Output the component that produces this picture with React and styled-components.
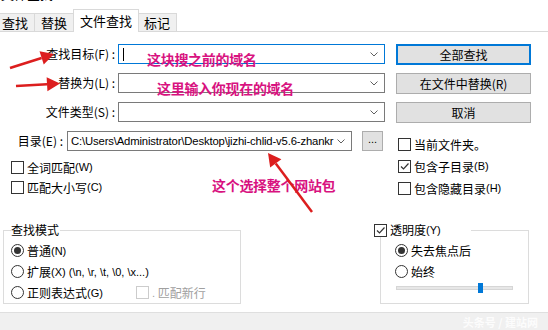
import React from "react";
import styled, { createGlobalStyle } from "styled-components";

const GlobalStyle = createGlobalStyle`
  html, body { margin: 0; padding: 0; background: #fff; }
  body {
    font-family: "Noto Sans CJK SC", "Noto Sans", sans-serif;
    font-size: 12px;
    color: #000;
  }
`;

const Window = styled.div`
  position: relative;
  width: 548px;
  height: 330px;
  overflow: hidden;
  display: flex;
  flex-direction: column;
  background: #fff;
`;

// window title, mostly cut off by the screenshot
const TitleStub = styled.div`
  height: 9px;
  overflow: hidden;
  padding-left: 1px;
  span {
    display: block;
    margin-top: -13px;
    font-size: 13px;
    line-height: 14px;
  }
`;

//tabs
const TabBar = styled.div`
  display: flex;
  align-items: flex-end;
  height: 22px;
  border-bottom: 1px solid #d9d9d9;
  margin-left: -4px;
`;

const Tab = styled.div`
  box-sizing: border-box;
  height: ${p => (p.$active ? 23 : 18)}px;
  margin: 0 ${p => (p.$active ? -1 : 0)}px ${p => (p.$active ? -1 : 0)}px -1px;
  padding: 0 6px ${p => (p.$active ? 2 : 0)}px;
  background: ${p => (p.$active ? "#fff" : "#f0f0f0")};
  border: 1px solid #d9d9d9;
  border-bottom: none;
  font-size: 13px;
  display: flex;
  align-items: center;
  position: relative;
  z-index: ${p => (p.$active ? 1 : 0)};
`;

const Panel = styled.div`
  padding-top: 12px;
  display: flex;
  flex-direction: column;
`;

//form rows
const FieldRow = styled.div`
  display: flex;
  align-items: flex-start;
  height: 21px;
  margin-bottom: ${p => (p.$last ? 0 : 8)}px;
`;

const Label = styled.div`
  width: ${p => p.$w}px;
  height: 20px;
  line-height: 20px;
  text-align: right;
  white-space: nowrap;
`;

const Combo = styled.div`
  box-sizing: border-box;
  width: ${p => p.$w}px;
  height: 20px;
  margin-left: ${p => p.$ml}px;
  border: 1px solid ${p => (p.$focus ? "#0078d7" : "#7a7a7a")};
  background: #fff;
  display: flex;
  align-items: center;
  padding: 0 6px 0 3px;
`;

const ComboText = styled.div`
  flex: 1;
  overflow: hidden;
  white-space: nowrap;
  font-family: "Liberation Sans", "Noto Sans", sans-serif;
  font-size: 11.3px;
  letter-spacing: -0.15px;
`;

const Caret = styled.div`
  width: 1px;
  height: 13px;
  background: #000;
  margin-left: 1px;
`;

const ActionButton = styled.button`
  box-sizing: border-box;
  width: 135px;
  height: 21px;
  margin: 0 0 0 11px;
  padding: 0;
  background: #e1e1e1;
  border: ${p => (p.$default ? "2px solid #0078d7" : "1px solid #adadad")};
  font-family: inherit;
  font-size: 12px;
  color: #000;
  display: flex;
  align-items: center;
  justify-content: center;
`;

const DotsButton = styled.button`
  box-sizing: border-box;
  width: 21px;
  height: 20px;
  margin: 0 0 0 10px;
  padding: 0 0 4px;
  background: #e1e1e1;
  border: 1px solid #adadad;
  font-family: "Liberation Sans", sans-serif;
  font-size: 11px;
  color: #000;
`;

const Middle = styled.div`
  display: flex;
`;

const LeftCol = styled.div`
  width: 398px;
  display: flex;
  flex-direction: column;
`;

const LeftChecks = styled.div`
  margin-top: 5px;
  padding-left: 11px;
`;

const RightCol = styled.div`
  padding-top: 2px;
`;

const CheckRow = styled.div`
  display: flex;
  align-items: center;
  height: ${p => p.$h || 22}px;
  color: ${p => (p.$disabled ? "#a0a0a0" : "#000")};
  white-space: nowrap;
`;

const Box = styled.div`
  box-sizing: border-box;
  width: 13px;
  height: 13px;
  border: 1px solid ${p => (p.$disabled ? "#cccccc" : "#333")};
  background: #fff;
  margin-right: 3px;
  display: flex;
  align-items: center;
  justify-content: center;
`;

const Radio = styled.div`
  box-sizing: border-box;
  width: 13px;
  height: 13px;
  border-radius: 50%;
  border: 1px solid #333;
  margin-right: 3px;
  display: flex;
  align-items: center;
  justify-content: center;
  &::after {
    content: "";
    display: ${p => (p.$on ? "block" : "none")};
    width: 7px;
    height: 7px;
    border-radius: 50%;
    background: #333;
  }
`;

const Small = styled.span`
  font-family: "Liberation Sans", sans-serif;
  font-size: 11px;
`;

//bottom groups
const Bottom = styled.div`
  display: flex;
  margin-top: 24px;
  padding-left: 3px;
`;

const Group = styled.fieldset`
  box-sizing: border-box;
  width: ${p => p.$w}px;
  margin: 0 0 0 ${p => p.$ml || 0}px;
  padding: 3px 0 ${p => p.$pb || 0}px ${p => p.$pl}px;
  border: 1px solid #dcdcdc;
`;

const Legend = styled.legend`
  padding: 0 1px 0 0;
  margin-left: ${p => p.$ml || 0}px;
  width: ${p => (p.$w ? `${p.$w}px` : "auto")};
  line-height: 14px;
  background: #fff;
`;

const LegendCheck = styled.div`
  display: flex;
  align-items: center;
  height: 14px;
`;

const Gap = styled.div`
  width: ${p => p.$w}px;
`;

const Slider = styled.div`
  position: relative;
  width: 117px;
  height: 12px;
  margin-left: 1px;
  display: flex;
  align-items: center;
`;

const Track = styled.div`
  box-sizing: border-box;
  width: 100%;
  height: 4px;
  background: #e7e7e7;
  border: 1px solid #d6d6d6;
`;

const Thumb = styled.div`
  position: absolute;
  top: 1px;
  left: ${p => p.$pos}px;
  width: 5px;
  height: 10px;
  background: #0078d7;
`;

const Footer = styled.div`
  margin-top: auto;
  height: 17px;
  border-top: 1px solid #dfdfdf;
  background: #f0f0f0;
  display: flex;
  justify-content: flex-end;
  align-items: center;
  padding-right: 10px;
  color: rgba(255, 255, 255, 0.85);
  font-size: 11px;
  font-weight: bold;
`;

//annotations drawn over the dialog
const Note = styled.div`
  position: absolute;
  left: ${p => p.$x}px;
  top: ${p => p.$y}px;
  color: #d8127f;
  font-size: 14px;
  font-weight: bold;
  line-height: 18px;
  white-space: nowrap;
  letter-spacing: -0.3px;
`;

const Overlay = styled.svg`
  position: absolute;
  left: 0;
  top: 0;
  pointer-events: none;
`;

const Chevron = () => (
  <svg width="8" height="5" viewBox="0 0 8 5">
    <path d="M0.5 0.5 L4 4 L7.5 0.5" fill="none" stroke="#606060" strokeWidth="1" />
  </svg>
);

const Tick = () => (
  <svg width="11" height="11" viewBox="0 0 11 11">
    <path d="M2 5.5 L4.5 8 L9.5 2.5" fill="none" stroke="#333" strokeWidth="1.2" />
  </svg>
);

const Check = ({ on, disabled, children, h }) => (
  <CheckRow $disabled={disabled} $h={h}>
    <Box $disabled={disabled}>{on ? <Tick /> : null}</Box>
    {children}
  </CheckRow>
);

const Arrow = ({ x1, y1, x2, y2 }) => {
  const len = Math.hypot(x2 - x1, y2 - y1);
  const ux = (x2 - x1) / len;
  const uy = (y2 - y1) / len;
  const bx = x2 - ux * 13;
  const by = y2 - uy * 13;
  const px = -uy * 7;
  const py = ux * 7;
  return (
    <g>
      <line x1={x1} y1={y1} x2={bx} y2={by} stroke="#dc1e1e" strokeWidth="2.5" />
      <polygon
        points={`${x2},${y2} ${bx + px},${by + py} ${bx - px},${by - py}`}
        fill="#dc1e1e"
      />
    </g>
  );
};

const rows = [
  { label: "查找目标(F) :", button: "全部查找", focus: true },
  { label: "替换为(L) :", button: "在文件中替换(R)" },
  { label: "文件类型(S) :", button: "取消" },
];

export default function App() {
  return (
    <Window>
      <GlobalStyle />
      <TitleStub><span>文件查找</span></TitleStub>
      <TabBar>
        <Tab>查找</Tab>
        <Tab>替换</Tab>
        <Tab $active>文件查找</Tab>
        <Tab>标记</Tab>
      </TabBar>

      <Panel>
        {rows.map(r => (
          <FieldRow key={r.label}>
            <Label $w={115}>{r.label}</Label>
            <Combo $w={267} $ml={3} $focus={r.focus}>
              <ComboText>{r.focus ? <Caret /> : null}</ComboText>
              <Chevron />
            </Combo>
            <ActionButton $default={r.focus}>{r.button}</ActionButton>
          </FieldRow>
        ))}

        <Middle>
          <LeftCol>
            <FieldRow $last>
              <Label $w={63}>目录(E) :</Label>
              <Combo $w={285} $ml={4}>
                <ComboText>{"C:\\Users\\Administrator\\Desktop\\jizhi-chlid-v5.6-zhankr"}</ComboText>
                <Chevron />
              </Combo>
              <DotsButton>...</DotsButton>
            </FieldRow>
            <LeftChecks>
              <Check h={20}>全词匹配<Small>(W)</Small></Check>
              <Check h={20}>匹配大小写<Small>(C)</Small></Check>
            </LeftChecks>
          </LeftCol>
          <RightCol>
            <Check>当前文件夹。</Check>
            <Check on>包含子目录<Small>(B)</Small></Check>
            <Check>包含隐藏目录<Small>(H)</Small></Check>
          </RightCol>
        </Middle>

        <Bottom>
          <Group $w={238} $pl={7} $pb={0}>
            <Legend>查找模式</Legend>
            <CheckRow $h={21}><Radio $on />普通<Small>(N)</Small></CheckRow>
            <CheckRow $h={21}><Radio />扩展<Small>{"(X) (\\n, \\r, \\t, \\0, \\x...)"}</Small></CheckRow>
            <CheckRow $h={21}>
              <Radio />正则表达式<Small>(G)</Small>
              <Gap $w={33} />
              <Check disabled h={21}><Small>.</Small>&nbsp;匹配新行</Check>
            </CheckRow>
          </Group>
          <Group $w={149} $ml={139} $pl={14} $pb={4}>
            <Legend $ml={-21} $w={96}>
              <LegendCheck>
                <Box><Tick /></Box>透明度<Small>(Y)</Small>
              </LegendCheck>
            </Legend>
            <CheckRow $h={21}><Radio $on />失去焦点后</CheckRow>
            <CheckRow $h={21}><Radio />始终</CheckRow>
            <Slider>
              <Track />
              <Thumb $pos={82} />
            </Slider>
          </Group>
        </Bottom>
      </Panel>

      <Footer>头条号 / 建站网</Footer>

      <Note $x={147} $y={50}>这块搜之前的域名</Note>
      <Note $x={157} $y={79}>这里输入你现在的域名</Note>
      <Note $x={212} $y={176}>这个选择整个网站包</Note>

      <Overlay width="548" height="330">
        <Arrow x1={10} y1={68} x2={54} y2={54} />
        <Arrow x1={16} y1={86} x2={60} y2={83.5} />
        <Arrow x1={312} y1={212} x2={268} y2={153} />
      </Overlay>
    </Window>
  );
}
